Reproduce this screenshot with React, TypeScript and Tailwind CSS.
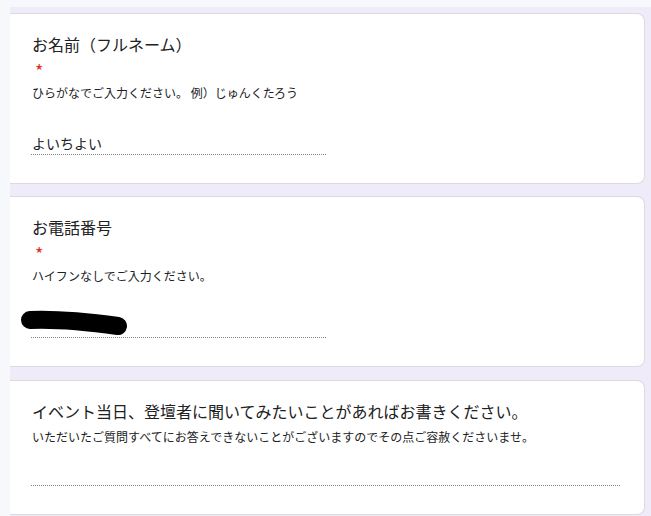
// App.tsx - Google フォーム風の回答画面
const font = { fontFamily: '"Noto Sans CJK JP", "Noto Sans", sans-serif' }

function Card({ children, className = '' }: { children: React.ReactNode; className?: string }) {
  return (
    <div
      className={`bg-white border-y border-r border-[#dadce0] rounded-r-[8px] pl-[22px] pt-[18px] pb-[28px] ${className}`}
    >
      {children}
    </div>
  )
}

function Required() {
  return <div className="h-[20px] pt-[4px] pl-[3px] text-[18px] leading-[20px] text-[#d93025]">*</div>
}

function Redaction() {
  return (
    <svg width="112" height="28" viewBox="0 0 112 28" className="block">
      <path d="M11 10 C 35 9, 70 12, 99 16" stroke="#000" strokeWidth="18" strokeLinecap="round" fill="none" />
    </svg>
  )
}

export default function App() {
  return (
    <div className="flex min-h-screen bg-[#f7f8fc] text-[#202124]" style={font}>
      <div className="w-[10px] shrink-0" />
      <div className="flex-1 mt-[7px] bg-[#f0ebf8] pt-[6px] pr-[6px] flex flex-col gap-[13px]">
        {/* お名前 */}
        <Card>
          <div className="text-[16px] leading-[24px]">お名前（フルネーム）</div>
          <Required />
          <div className="text-[12px] leading-[18px] mt-[8px]">ひらがなでご入力ください。 例）じゅんくたろう</div>
          <div className="mt-[31px] -ml-[1px] w-[295px] h-[22px] border-b border-dotted border-[#80868b] text-[14px] leading-[20px] pl-[1px]">
            よいちよい
          </div>
        </Card>

        {/* お電話番号 */}
        <Card className="-mt-[1px]">
          <div className="text-[16px] leading-[24px]">お電話番号</div>
          <Required />
          <div className="text-[12px] leading-[18px] mt-[8px]">ハイフンなしでご入力ください。</div>
          <div className="mt-[31px] -ml-[1px] w-[295px] h-[22px] border-b border-dotted border-[#80868b] relative">
            <div className="absolute left-[-12px] top-[-6px]">
              <Redaction />
            </div>
          </div>
        </Card>

        {/* 質問 */}
        <Card className="mb-[3px]">
          <div className="text-[16px] leading-[24px]">イベント当日、登壇者に聞いてみたいことがあればお書きください。</div>
          <div className="text-[12px] leading-[18px] mt-[5px]">
            いただいたご質問すべてにお答えできないことがございますのでその点ご容赦くださいませ。
          </div>
          <div className="mt-[18px] -ml-[1px] w-[589px] h-[22px] border-b border-dotted border-[#80868b]" />
        </Card>
      </div>
    </div>
  )
}
